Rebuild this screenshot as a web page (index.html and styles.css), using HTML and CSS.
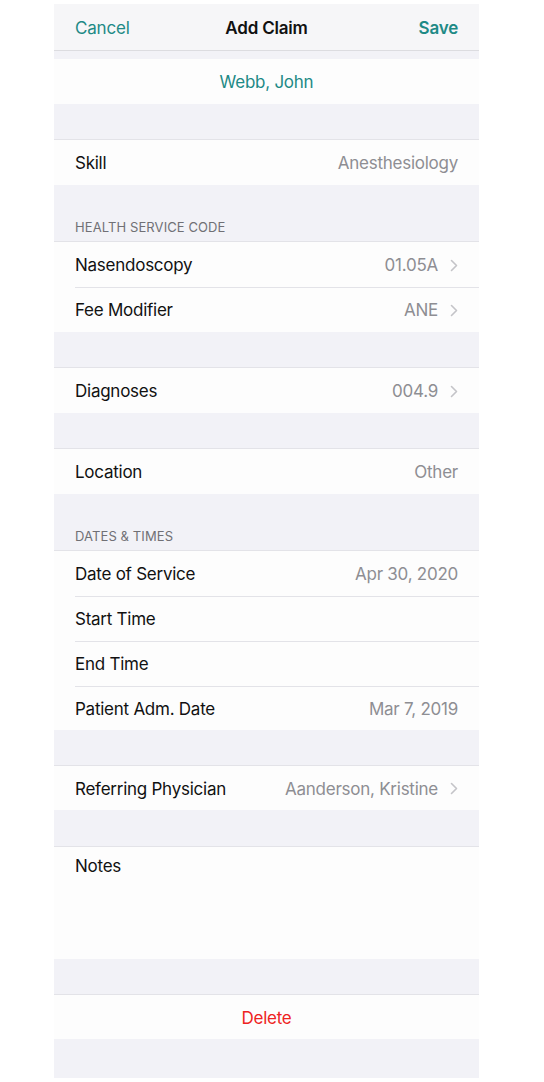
FILE: index.html
```html
<!DOCTYPE html>
<html>
<head>
<meta charset="utf-8">
<link rel="stylesheet" href="styles.css">
</head>
<body>
<div class="screen">
  <header class="nav">
    <span class="nav-btn">Cancel</span>
    <span class="nav-title">Add Claim</span>
    <span class="nav-btn bold">Save</span>
  </header>
  <div class="gap small"></div>
  <div class="group">
    <div class="row center teal">Webb, John</div>
  </div>
  <div class="gap"></div>
  <div class="group">
    <div class="row"><span class="label">Skill</span><span class="value">Anesthesiology</span></div>
  </div>
  <div class="gap header"><span>HEALTH SERVICE CODE</span></div>
  <div class="group">
    <div class="row"><span class="label">Nasendoscopy</span><span class="value">01.05A<svg class="chev" viewBox="0 0 8 13"><path d="M1.5 1.5 L6.5 6.5 L1.5 11.5"/></svg></span></div>
    <div class="row"><span class="label">Fee Modifier</span><span class="value">ANE<svg class="chev" viewBox="0 0 8 13"><path d="M1.5 1.5 L6.5 6.5 L1.5 11.5"/></svg></span></div>
  </div>
  <div class="gap"></div>
  <div class="group">
    <div class="row"><span class="label">Diagnoses</span><span class="value">004.9<svg class="chev" viewBox="0 0 8 13"><path d="M1.5 1.5 L6.5 6.5 L1.5 11.5"/></svg></span></div>
  </div>
  <div class="gap"></div>
  <div class="group">
    <div class="row"><span class="label">Location</span><span class="value">Other</span></div>
  </div>
  <div class="gap header"><span>DATES &amp; TIMES</span></div>
  <div class="group">
    <div class="row"><span class="label">Date of Service</span><span class="value">Apr 30, 2020</span></div>
    <div class="row"><span class="label">Start Time</span></div>
    <div class="row"><span class="label">End Time</span></div>
    <div class="row short-last"><span class="label">Patient Adm. Date</span><span class="value">Mar 7, 2019</span></div>
  </div>
  <div class="gap"></div>
  <div class="group">
    <div class="row short"><span class="label">Referring Physician</span><span class="value">Aanderson, Kristine<svg class="chev" viewBox="0 0 8 13"><path d="M1.5 1.5 L6.5 6.5 L1.5 11.5"/></svg></span></div>
  </div>
  <div class="gap tall"></div>
  <div class="group">
    <div class="notes"><span class="label">Notes</span></div>
  </div>
  <div class="gap"></div>
  <div class="group">
    <div class="row short center red">Delete</div>
  </div>
  <div class="gap fill"></div>
</div>
</body>
</html>
```
FILE: styles.css
```css
html, body {
  margin: 0;
  padding: 0;
  background: #ffffff;
}
body {
  font-family: Inter, "Liberation Sans", sans-serif;
  -webkit-font-smoothing: antialiased;
}
.screen {
  width: 425px;
  height: 1074px;
  margin: 4px 0 0 54px;
  background: #f2f2f7;
  display: flex;
  flex-direction: column;
  overflow: hidden;
}
.nav {
  flex: none;
  background: #f6f6f8;
  border-bottom: 1px solid #dcdce0;
  display: flex;
  align-items: center;
  justify-content: space-between;
  padding: 2px 21px 0;
  box-sizing: border-box;
  height: 47px;
}
.nav-btn {
  color: #1e8a86;
  font-size: 17px;
  letter-spacing: -0.2px;
  width: 80px;
}
.nav-btn.bold {
  font-weight: 600;
  text-align: right;
}
.nav-title {
  font-size: 17px;
  font-weight: 600;
  letter-spacing: -0.2px;
  color: #111;
}
.gap {
  height: 36px;
  flex: none;
  border-bottom: 1px solid #e3e3e8;
  box-sizing: border-box;
}
.gap.small {
  height: 8px;
  border-bottom: none;
}
.gap.tall {
  height: 37px;
}
.gap.header {
  height: 57px;
  display: flex;
  align-items: flex-end;
  padding: 0 21px 6px;
  font-size: 13px;
  color: #707075;
  letter-spacing: 0.1px;
}
.gap.fill {
  flex: 1;
  border-bottom: none;
}
.group {
  background: #fdfdfd;
  flex: none;
}
.row {
  height: 45px;
  display: flex;
  align-items: center;
  justify-content: space-between;
  padding: 1px 21px 0;
  box-sizing: border-box;
  font-size: 17px;
  letter-spacing: -0.25px;
  position: relative;
}
.row.short {
  height: 44px;
}
.row.short-last {
  height: 44px;
}
.row + .row::before {
  content: "";
  position: absolute;
  left: 21px;
  right: 0;
  top: 0;
  border-top: 1px solid #e3e3e8;
}
.label {
  color: #111;
}
.value {
  color: #8e8e93;
  display: flex;
  align-items: center;
}
.chev {
  width: 8px;
  height: 13px;
  margin-left: 12px;
  fill: none;
  stroke: #c4c4c8;
  stroke-width: 1.6;
  stroke-linecap: round;
  stroke-linejoin: round;
}
.row.center {
  justify-content: center;
}
.teal {
  color: #1e8a86;
}
.red {
  color: #ee2222;
}
.notes {
  height: 112px;
  padding: 9px 21px 0;
  box-sizing: border-box;
  font-size: 17px;
  letter-spacing: -0.25px;
}
```
